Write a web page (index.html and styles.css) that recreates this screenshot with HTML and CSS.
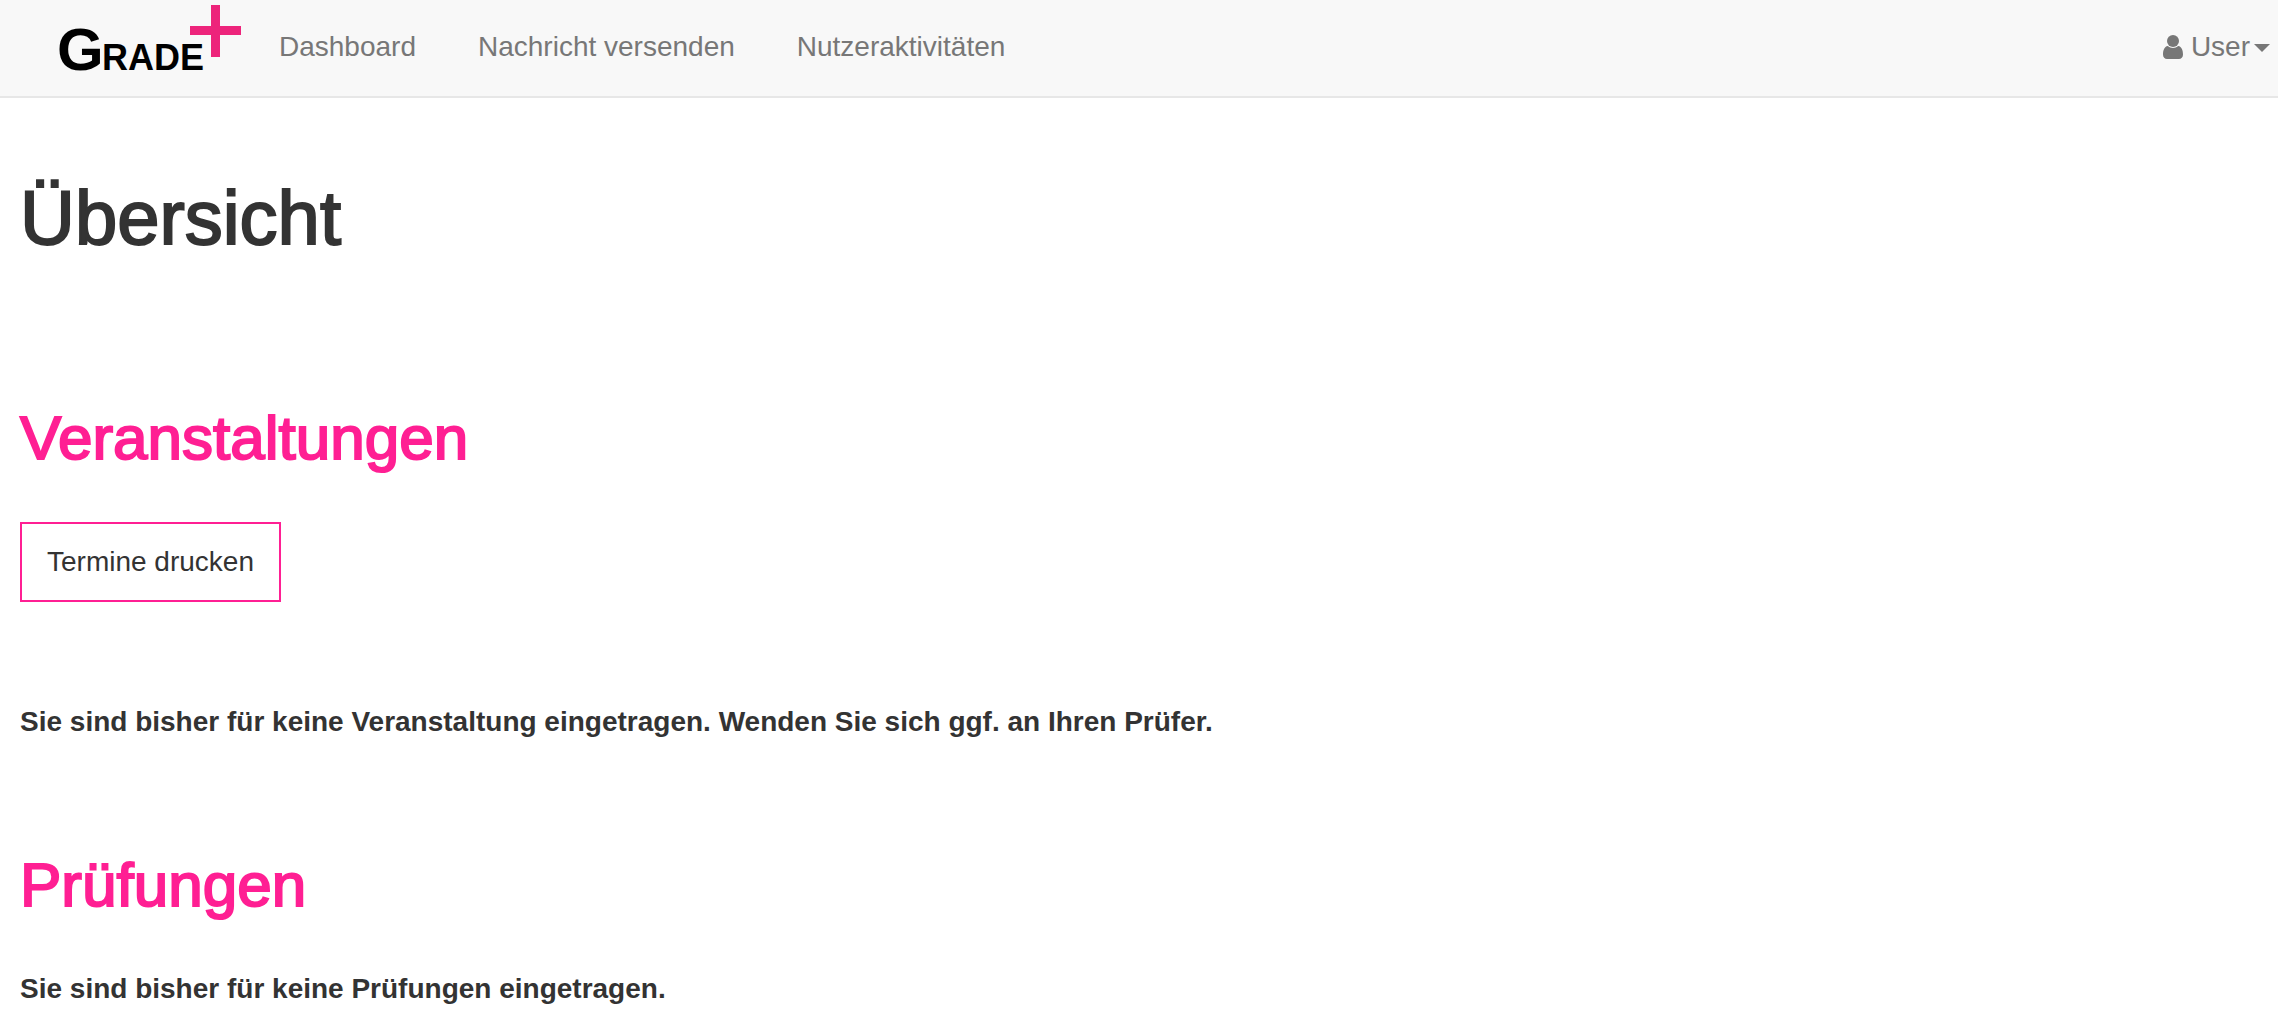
FILE: index.html
```html
<!DOCTYPE html>
<html lang="de">
<head>
  <meta charset="utf-8">
  <meta name="viewport" content="width=device-width, initial-scale=1">
  <title>Übersicht – Grade+</title>
  <link rel="stylesheet" href="styles.css">
</head>
<body>
  <header class="navbar">
    <a class="brand" href="#" aria-label="Grade+">
      <svg class="brand-logo" width="188" height="90" viewBox="0 0 188 90">
        <text class="logo-initial" x="2" y="70">G</text>
        <text class="logo-rest" x="47" y="70">RADE</text>
        <path fill="#ed247b" d="M156 5h9v21h21v9h-21v22h-9V35h-21v-9h21z"/>
      </svg>
    </a>
    <nav class="nav-main">
      <a class="nav-link" href="#">Dashboard</a>
      <a class="nav-link" href="#">Nachricht versenden</a>
      <a class="nav-link" href="#">Nutzeraktivitäten</a>
    </nav>
    <button class="user-menu" type="button" aria-haspopup="true">
      <svg class="user-icon" width="20" height="24" viewBox="0 0 20 24" fill="currentColor">
        <circle cx="10" cy="6" r="6"/>
        <path d="M4.800 11C1.200 11.600 0 15.500 0 19.500C0 22.300 1.800 24 4 24h12c2.200 0 4-1.700 4-4.500c0-4-1.200-7.900-4.800-8.500C13.800 12.300 12 13 10 13s-3.800-.700-5.200-2z"/>
      </svg>
      <span class="user-name">User</span>
      <svg class="caret" width="16" height="8" viewBox="0 0 16 8" fill="currentColor"><path d="M0 0h16L8 8z"/></svg>
    </button>
  </header>

  <main class="content">
    <h1 class="page-title">Übersicht</h1>

    <section class="section">
      <h2 class="section-title">Veranstaltungen</h2>
      <button class="btn" type="button">Termine drucken</button>
      <p class="notice notice-spaced">Sie sind bisher für keine Veranstaltung eingetragen. Wenden Sie sich ggf. an Ihren Prüfer.</p>
    </section>

    <section class="section">
      <h2 class="section-title">Prüfungen</h2>
      <p class="notice">Sie sind bisher für keine Prüfungen eingetragen.</p>
    </section>
  </main>
</body>
</html>
```
FILE: styles.css
```css
* {
  box-sizing: border-box;
}

body {
  margin: 0;
  background: #fff;
  color: #333;
  font: 28px/40px "Helvetica Neue", "Liberation Sans", Arial, sans-serif;
}

.navbar {
  display: flex;
  align-items: flex-start;
  min-height: 98px;
  padding: 0 8px 0 55px;
  background: #f8f8f8;
  border-bottom: 2px solid #e7e7e7;
}

.brand {
  display: block;
  margin-right: 5px;
}

.brand-logo {
  display: block;
}

.logo-initial,
.logo-rest {
  font-weight: bold;
  fill: #000;
}

.logo-initial {
  font-size: 60px;
}

.logo-rest {
  font-size: 36px;
}

.nav-main {
  display: flex;
  flex-wrap: wrap;
}

.nav-link {
  padding: 27px 31px;
  color: #777;
  text-decoration: none;
}

.user-menu {
  display: flex;
  align-items: center;
  margin-left: auto;
  padding: 27px 0;
  border: 0;
  background: none;
  color: #777;
  font: inherit;
  cursor: pointer;
}

.user-name {
  margin: 0 4px 0 8px;
}

.caret {
  margin-top: 2px;
}

.content {
  padding: 80px 20px 0;
}

.page-title,
.section-title {
  margin: 0;
  font-weight: normal;
  -webkit-text-stroke: 2px currentColor;
}

.page-title {
  margin-bottom: 146px;
  font-size: 76px;
  line-height: 80px;
}

.section + .section {
  margin-top: 109px;
}

.section-title {
  margin-bottom: 50px;
  color: #ff1f93;
  font-size: 62px;
  line-height: 68px;
}

.btn {
  display: block;
  padding: 18px 25px;
  border: 2px solid #ff1f93;
  background: #fff;
  color: #333;
  font: inherit;
  cursor: pointer;
}

.notice {
  margin: 0;
  font-weight: bold;
}

.notice-spaced {
  margin-top: 100px;
}
```
